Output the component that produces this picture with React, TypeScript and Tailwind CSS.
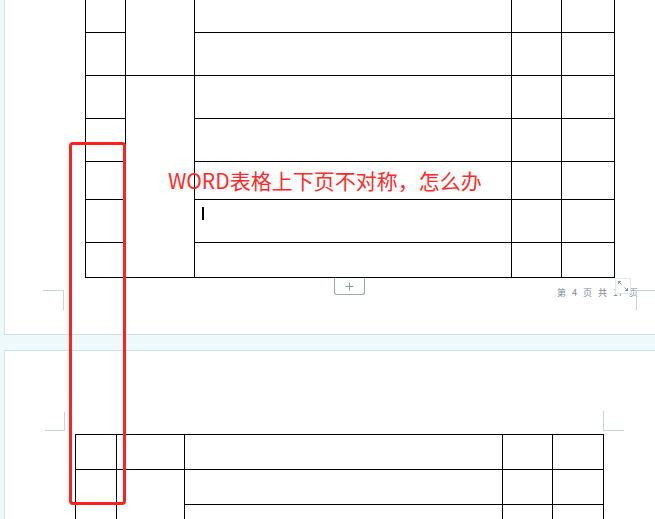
import * as React from 'react'

const cell = 'bg-white'

function TopTable() {
  // column 2 is merged over rows 1-2 and rows 3-7
  const rows = [0, 1, 2, 3, 4, 5, 6]
  return (
    <div className="ml-[80px] -mt-[12px] w-fit grid grid-cols-[39px_68px_316px_49px_52px] grid-rows-[43px_42px_42px_42px_37px_42px_34px] gap-px bg-black p-px">
      {rows.map((r) => (
        <React.Fragment key={r}>
          <div className={cell} />
          {r === 0 && <div className={`${cell} row-span-2`} />}
          {r === 2 && <div className={`${cell} row-span-5`} />}
          <div className={cell}>
            {r === 5 && <div className="ml-[7px] mt-[7px] w-[2px] h-[13px] bg-black" />}
          </div>
          <div className={cell} />
          <div className={cell} />
        </React.Fragment>
      ))}
    </div>
  )
}

function BottomTable() {
  const rows = [0, 1, 2]
  return (
    <div className="ml-[70px] mt-[83px] w-fit grid grid-cols-[40px_67px_317px_49px_50px] grid-rows-[34px_34px_40px] gap-px bg-black p-px">
      {rows.map((r) => (
        <React.Fragment key={r}>
          <div className={cell} />
          {r === 0 && <div className={cell} />}
          {r === 1 && <div className={`${cell} row-span-2`} />}
          <div className={cell} />
          <div className={cell} />
          <div className={cell} />
        </React.Fragment>
      ))}
    </div>
  )
}

function PageFooter() {
  return (
    <>
      {/* left corner mark */}
      <div className="absolute left-[38px] top-[290px] w-[21px] h-[20px] border-t border-r border-[#c9d5de]" />
      {/* add-row tab */}
      <div className="absolute left-[329px] top-[278px] w-[31px] h-[17px] border-x border-b border-[#9aa6b0] rounded-b-[3px] bg-white flex items-center justify-center">
        <svg width="9" height="9" viewBox="0 0 9 9">
          <path d="M4.5 0.5v8M0.5 4.5h8" stroke="#8a96a2" strokeWidth="1" />
        </svg>
      </div>
      {/* page number */}
      <div className="absolute left-[552px] top-[288px] flex gap-[6px] text-[9px] leading-[10px] text-[#7d8a96] font-['Noto_Sans_CJK_SC',sans-serif]">
        <span>第</span>
        <span>4</span>
        <span>页</span>
        <span>共</span>
        <span>17</span>
        <span>页</span>
      </div>
      <div className="absolute left-[610px] top-[278px] w-[16px] h-[16px] bg-white border border-[#e2e9ee] flex items-center justify-center">
        <svg width="12" height="12" viewBox="0 0 12 12" fill="none" stroke="#8a96a2" strokeWidth="1">
          <path d="M1.5 1.5l3 3M1.5 1.5h2.5M1.5 1.5v2.5" />
          <path d="M10.5 10.5l-3-3M10.5 10.5h-2.5M10.5 10.5v-2.5" />
        </svg>
      </div>
      {/* right corner mark */}
      <div className="absolute left-[631px] top-[290px] w-[30px] h-[20px] border-t border-l border-[#c9d5de]" />
    </>
  )
}

export default function App() {
  return (
    <div className="relative w-[655px] h-[519px] overflow-hidden bg-[#eef9fc] font-['Noto_Sans_CJK_SC',sans-serif]">
      <div className="flex flex-col pl-[4px] h-full">
        <div className="relative shrink-0 h-[335px] bg-white border-l border-b border-[#d2e0e8]">
          <TopTable />
          <PageFooter />
        </div>
        <div className="relative shrink-0 mt-[15px] h-[200px] bg-white border-l border-t border-[#d2e0e8]">
          <div className="absolute left-[40px] top-[61px] w-[20px] h-[19px] border-b border-r border-[#c9d5de]" />
          <div className="absolute left-[598px] top-[60px] w-[21px] h-[20px] border-b border-l border-[#c9d5de]" />
          <BottomTable />
        </div>
      </div>

      {/* annotation */}
      <div className="absolute left-[69px] top-[142px] w-[57px] h-[363px] border-[3px] border-[#ff2020] rounded-[4px]" />
      <div className="absolute left-[168px] top-[170px] text-[21px] leading-[21px] text-[#ff2a2a] whitespace-nowrap">
        WORD表格上下页不对称，怎么办
      </div>
    </div>
  )
}
